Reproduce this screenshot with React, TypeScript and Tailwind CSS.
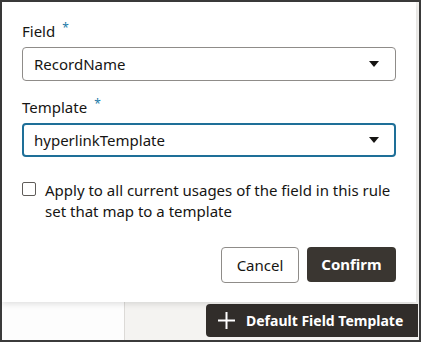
import React from "react";

const Caret = () => (
  <svg width="10" height="6" viewBox="0 0 10 6" className="shrink-0">
    <path d="M0 0h10L5 6z" fill="#161513" />
  </svg>
);

interface SelectProps {
  value: string;
  focused?: boolean;
}

const SelectBox: React.FC<SelectProps> = ({ value, focused }) => (
  <div
    className={
      focused
        ? "flex items-center justify-between h-[34px] rounded-[4px] border-2 border-[#1e6f98] pl-[10px] pr-[15px]"
        : "flex items-center justify-between h-[34px] rounded-[4px] border border-[#8f8c89] pl-[11px] pr-[16px]"
    }
  >
    <span className="text-[15px] text-[#161513]">{value}</span>
    <Caret />
  </div>
);

const Label: React.FC<{ text: string }> = ({ text }) => (
  <div className="flex items-start h-[25px] text-[15px] leading-[18px] text-[#161513]">
    <span>{text}</span>
    <span className="ml-[7px] -mt-[1px] text-[12px] leading-[14px] text-[#227aa8]">*</span>
  </div>
);

export default function App() {
  return (
    <div
      className="w-[421px] h-[342px] bg-[#3b3b3b] p-[2px]"
      style={{ fontFamily: '"Noto Sans", sans-serif' }}
    >
      <div className="flex flex-col w-[417px] h-[338px] bg-[#f4f3f1]">
        {/* Dialog */}
        <div className="relative z-10 w-[414px] h-[300px] bg-white shadow-[0_2px_6px_rgba(0,0,0,0.12)] px-[20px] pt-[20px]">
          <Label text="Field" />
          <SelectBox value="RecordName" />
          <div className="mt-[17px]">
            <Label text="Template" />
          </div>
          <SelectBox value="hyperlinkTemplate" focused />

          <div className="flex mt-[23px] gap-[9px]">
            <div className="mt-[2px] w-[14px] h-[14px] shrink-0 rounded-[2px] border border-[#5f5c59] bg-white" />
            <p className="text-[15px] leading-[21px] text-[#161513]">
              Apply to all current usages of the field in this rule set that map to a template
            </p>
          </div>

          <div className="flex justify-end gap-[8px] mt-[25px]">
            <button className="w-[78px] h-[36px] rounded-[4px] border border-[#8f8c89] bg-white text-[15px] text-[#161513]">
              Cancel
            </button>
            <button className="w-[89px] h-[35px] rounded-[4px] bg-[#3a3631] text-[15px] font-bold text-white">
              Confirm
            </button>
          </div>
        </div>

        {/* Page behind the dialog */}
        <div className="flex flex-1">
          <div className="w-[123px] bg-[#fdfdfd] border-r border-[#dcdad7]" />
          <div className="flex flex-1 justify-end items-start pt-[2px] pr-[1px]">
            <div className="flex items-center gap-[10px] w-[212px] h-[33px] rounded-tl-[4px] rounded-bl-[4px] bg-[#312d2a] pl-[11px]">
              <svg width="19" height="19" viewBox="0 0 19 19">
                <path d="M9.5 1v17M1 9.5h17" stroke="white" strokeWidth="2" />
              </svg>
              <span className="text-[14px] font-bold text-white">Default Field Template</span>
            </div>
          </div>
        </div>
      </div>
    </div>
  );
}
